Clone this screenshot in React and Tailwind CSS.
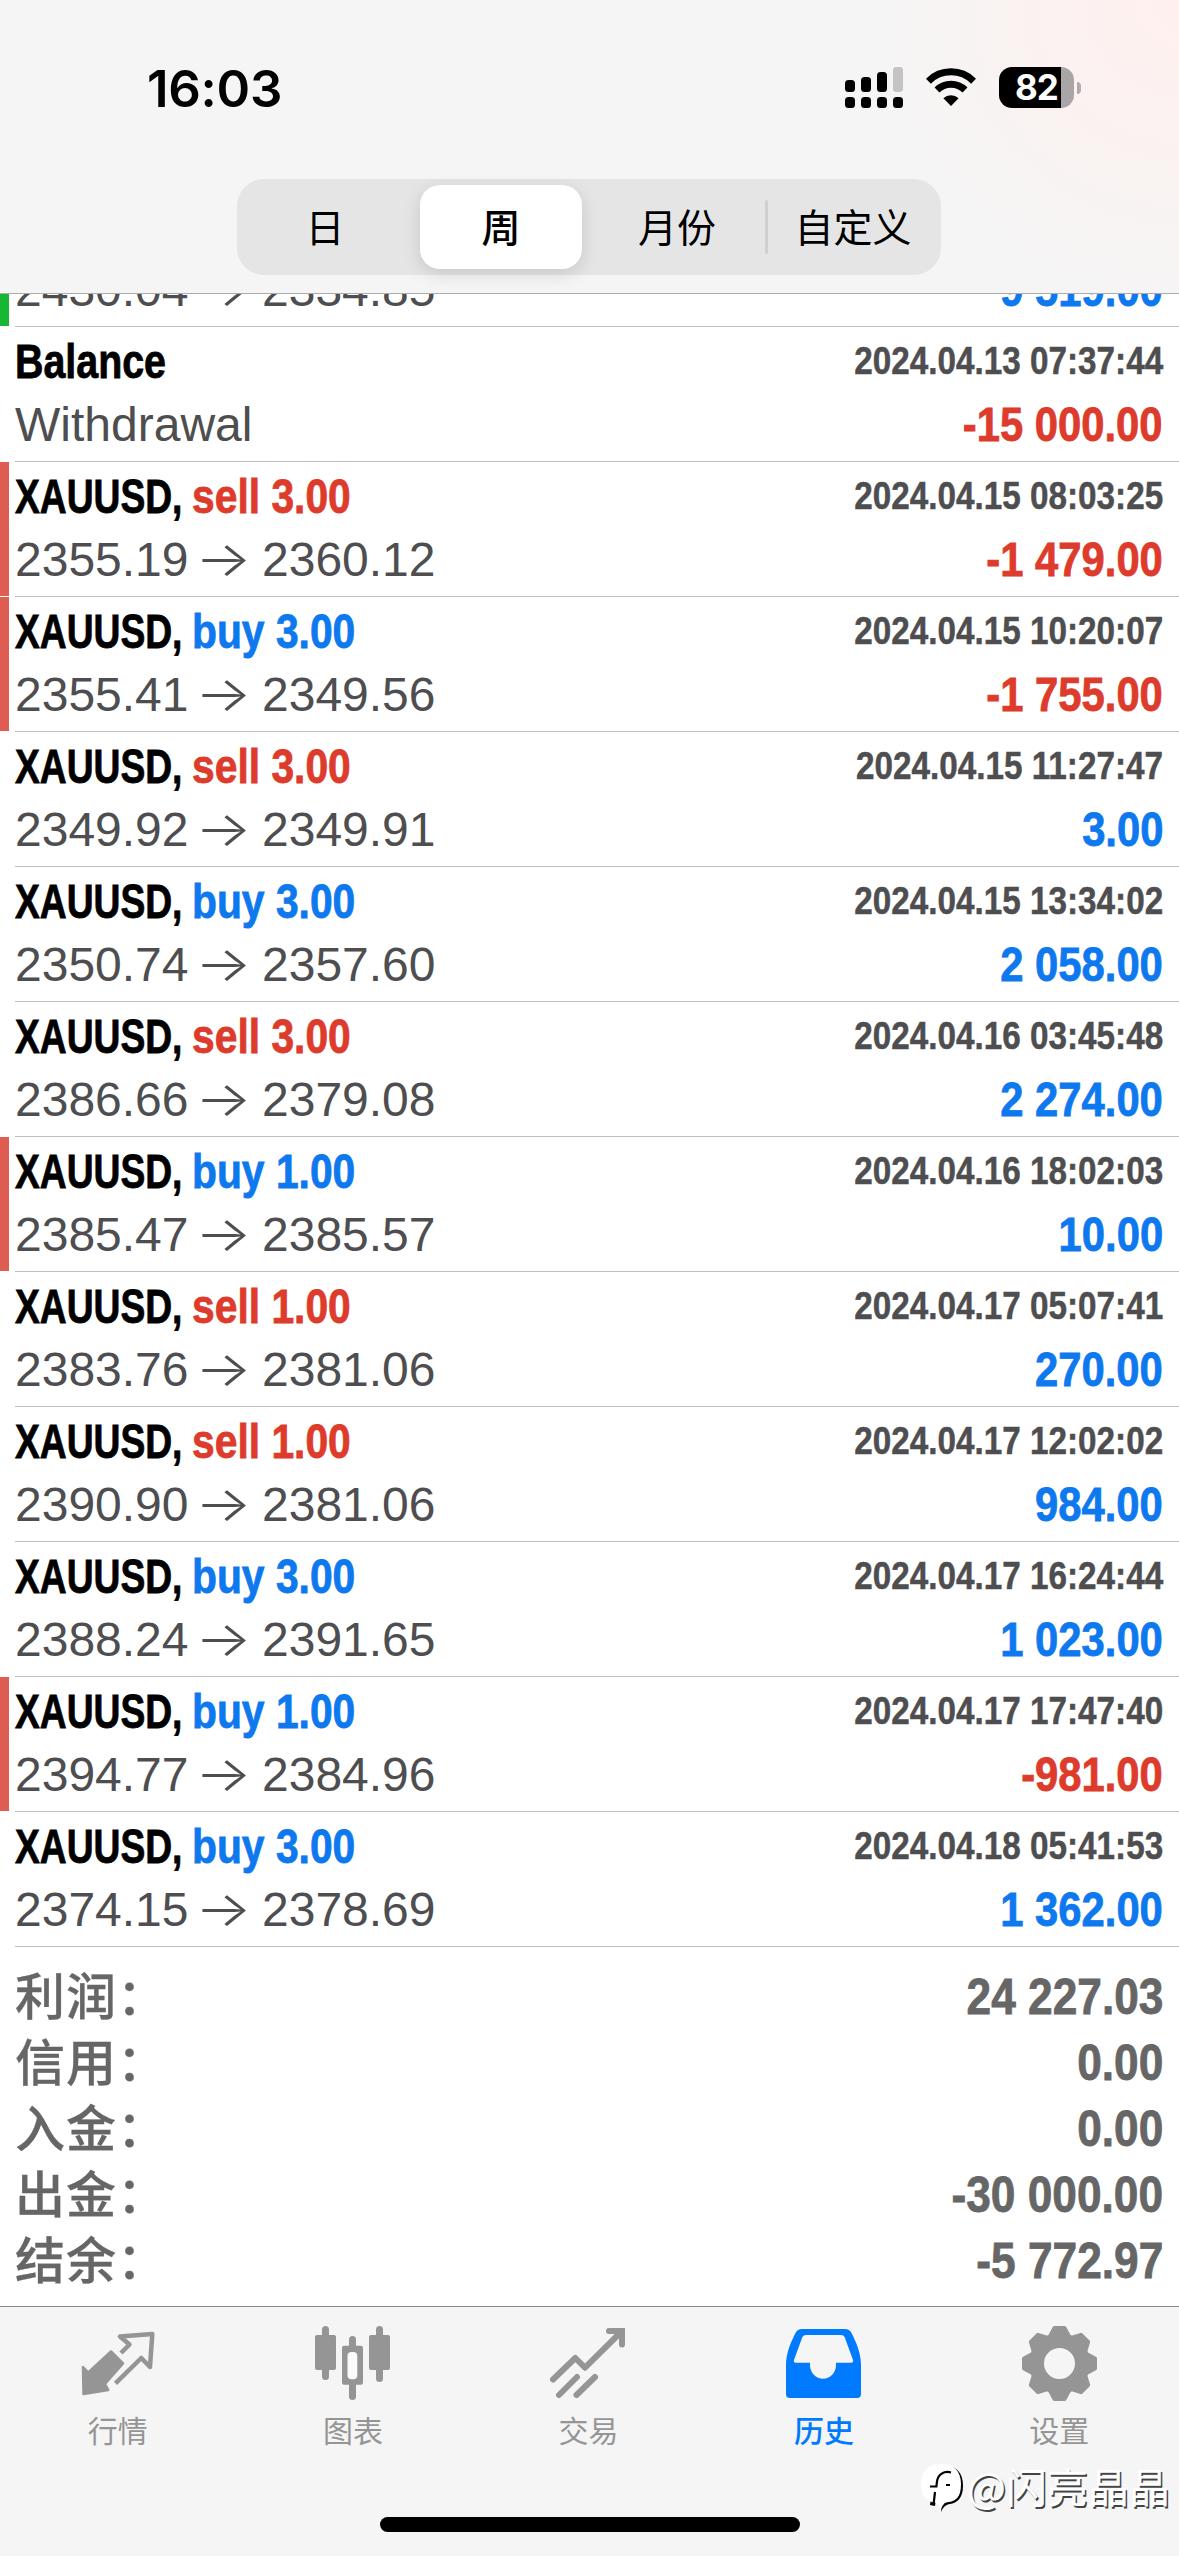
import clsx from "clsx";

const DEALS = [
  { side: "sell", lots: "3.00", from: "2355.19", to: "2360.12", time: "2024.04.15 08:03:25", profit: "-1 479.00", mark: "sl" },
  { side: "buy", lots: "3.00", from: "2355.41", to: "2349.56", time: "2024.04.15 10:20:07", profit: "-1 755.00", mark: "sl" },
  { side: "sell", lots: "3.00", from: "2349.92", to: "2349.91", time: "2024.04.15 11:27:47", profit: "3.00" },
  { side: "buy", lots: "3.00", from: "2350.74", to: "2357.60", time: "2024.04.15 13:34:02", profit: "2 058.00" },
  { side: "sell", lots: "3.00", from: "2386.66", to: "2379.08", time: "2024.04.16 03:45:48", profit: "2 274.00" },
  { side: "buy", lots: "1.00", from: "2385.47", to: "2385.57", time: "2024.04.16 18:02:03", profit: "10.00", mark: "sl" },
  { side: "sell", lots: "1.00", from: "2383.76", to: "2381.06", time: "2024.04.17 05:07:41", profit: "270.00" },
  { side: "sell", lots: "1.00", from: "2390.90", to: "2381.06", time: "2024.04.17 12:02:02", profit: "984.00" },
  { side: "buy", lots: "3.00", from: "2388.24", to: "2391.65", time: "2024.04.17 16:24:44", profit: "1 023.00" },
  { side: "buy", lots: "1.00", from: "2394.77", to: "2384.96", time: "2024.04.17 17:47:40", profit: "-981.00", mark: "sl" },
  { side: "buy", lots: "3.00", from: "2374.15", to: "2378.69", time: "2024.04.18 05:41:53", profit: "1 362.00" },
];

const TOTALS = [
  ["利润：", "24 227.03"],
  ["信用：", "0.00"],
  ["入金：", "0.00"],
  ["出金：", "-30 000.00"],
  ["结余：", "-5 772.97"],
];

const PERIODS = ["日", "周", "月份", "自定义"];

const GEAR_TEETH = [0, 45, 90, 135, 180, 225, 270, 315];

function SignalIcon() {
  return (
    <svg width="58" height="42" viewBox="0 0 58 42">
      <rect x="0" y="13" width="10" height="12" rx="3.5" />
      <rect x="16" y="10" width="10" height="15" rx="3.5" />
      <rect x="32" y="5" width="10" height="20" rx="3.5" />
      <rect x="48" y="0" width="10" height="25" rx="3" fill="#c4c4c4" />
      {[0, 16, 32, 48].map((x) => (
        <rect key={x} x={x} y="30" width="10" height="11" rx="3.5" />
      ))}
    </svg>
  );
}

function WifiIcon() {
  return (
    <svg width="50" height="42" viewBox="0 0 50 42" fill="none" stroke="#000" strokeWidth="7">
      <path d="M2.4 14.2a32 32 0 0 1 45.2 0" />
      <path d="M11 23a20 20 0 0 1 28 0" />
      <path d="M25 39l-7.6-7.8a11 11 0 0 1 15.2 0z" fill="#000" stroke="none" />
    </svg>
  );
}

function Battery() {
  return (
    <div className="flex items-center gap-[3px]">
      <div className="flex h-[41px] w-[75px] items-center justify-center overflow-hidden rounded-[13px] bg-linear-to-r from-black from-[62px] to-[#aaa5a6] to-[62px]">
        <span className="font-[Inter] text-[35px] leading-none font-bold tracking-[-1px] text-white">82</span>
      </div>
      <div className="h-3 w-1 rounded-r-full bg-[#b0acac]" />
    </div>
  );
}

function StatusBar() {
  return (
    <div className="flex h-[179px] justify-between pt-[67px] pr-[98px] pl-[147px]">
      <span className="font-[Inter] text-[51px] leading-[44px] font-semibold tracking-[-0.3px]">16:03</span>
      <div className="flex h-[42px] items-start gap-[23px]">
        <SignalIcon />
        <WifiIcon />
        <Battery />
      </div>
    </div>
  );
}

function PeriodPicker() {
  return (
    <div className="ml-[237px] grid h-24 w-[704px] grid-cols-4 rounded-[27px] bg-[#e6e5e6] font-['Noto_Sans_CJK_SC',sans-serif] text-[39px]">
      {PERIODS.map((p, i) => (
        <div key={p} className="flex items-center">
          <div
            className={clsx(
              "mx-[7px] flex h-[84px] flex-1 items-center justify-center rounded-[20px] pb-[5px] leading-[58px] whitespace-nowrap",
              i === 1 && "bg-white font-medium shadow-[0_5px_18px_rgba(0,0,0,0.13)]"
            )}
          >
            {p}
          </div>
          {i === 2 && <div className="-mr-[3px] h-[54px] w-[3px] rounded-full bg-[#d0d0d1]" />}
        </div>
      ))}
    </div>
  );
}

function Row({ title, detail, time, profit, mark }) {
  return (
    <div className="flex h-[135px] shrink-0">
      <div
        className={clsx(
          "h-[134px] w-[9px] shrink-0",
          mark === "sl" && "bg-[#de5c52]",
          mark === "tp" && "bg-[#18b733]"
        )}
      />
      <div className="ml-[6px] flex flex-1 justify-between border-b border-[#bcbfc1] pt-[3px] pr-4">
        <div className="text-[48px] leading-[63px] whitespace-nowrap">
          <div className="flex font-bold [-webkit-text-stroke:0.8px]">{title}</div>
          <div className="flex text-[#4e4e50]">{detail}</div>
        </div>
        <div className="flex flex-col items-end font-bold whitespace-nowrap">
          <div className="h-[63px] origin-right scale-x-[0.853] text-[39px] leading-[62px] text-[#4e4e50] [-webkit-text-stroke:0.5px]">
            {time}
          </div>
          <div
            className={clsx(
              "origin-right scale-x-[0.87] text-[48px] leading-[63px] [-webkit-text-stroke:0.8px]",
              profit.startsWith("-") ? "text-[#dd3b2b]" : "text-[#0e78ee]"
            )}
          >
            {profit}
          </div>
        </div>
      </div>
    </div>
  );
}

function Prices({ from, to }) {
  return (
    <>
      <span className="w-[184px]">{from}</span>
      <span className="w-[63px] origin-left -translate-x-1 scale-x-[1.24] font-[Inter] leading-[61px] font-light">→</span>
      <span>{to}</span>
    </>
  );
}

function Deal({ side, lots, from, to, time, profit, mark }) {
  return (
    <Row
      title={
        <>
          <span className="w-[177px] origin-left scale-x-[0.775]">XAUUSD,</span>
          <span className={clsx("origin-left scale-x-[0.85]", side === "sell" ? "text-[#dd3b2b]" : "text-[#0e78ee]")}>
            {side} {lots}
          </span>
        </>
      }
      detail={<Prices from={from} to={to} />}
      time={time}
      profit={profit}
      mark={mark}
    />
  );
}

function Totals() {
  return (
    <div className="h-[359px] pt-[17px] pr-4 pl-[15px] font-bold text-[#666]">
      {TOTALS.map(([label, value]) => (
        <div key={label} className="flex h-[66px] justify-between">
          <span className="font-['Noto_Sans_CJK_SC',sans-serif] text-[50px] leading-[58px] font-medium tracking-[1px] [-webkit-text-stroke:0.3px]">
            {label}
          </span>
          <span className="origin-right scale-x-[0.885] text-[50px] leading-[66px] [-webkit-text-stroke:0.8px]">{value}</span>
        </div>
      ))}
    </div>
  );
}

function QuotesIcon() {
  return (
    <svg width="80" height="80" viewBox="0 0 80 80" fill="none" stroke="currentColor" strokeLinejoin="round">
      <path d="M4 45l5.300 5.500L32 29.500 44 41.500 26 62l3.300 6L4.500 72z" fill="currentColor" strokeWidth="2.500" />
      <path d="M42 31l8.500-8.500L41 14.500l32.300-2.600L71 45l-8.700-9-25.800 25.300" strokeWidth="4.500" />
    </svg>
  );
}

function ChartIcon() {
  return (
    <svg width="80" height="80" viewBox="0 0 80 80" fill="currentColor">
      <rect x="8" y="4" width="7" height="54" rx="3.500" />
      <rect x="1" y="13" width="21" height="35" rx="2" />
      <rect x="35" y="14" width="7" height="64" rx="3.500" />
      <rect x="28" y="23.700" width="21" height="39" rx="2" />
      <rect x="33.500" y="30" width="9.800" height="27.300" rx="4" fill="#fafafa" />
      <rect x="62" y="4" width="7" height="56" rx="3.500" />
      <rect x="55" y="13" width="21" height="35" rx="2" />
    </svg>
  );
}

function TradeIcon() {
  return (
    <svg width="80" height="80" viewBox="0 0 80 80" fill="none" stroke="currentColor" strokeWidth="6" strokeLinecap="round">
      <path d="M4 57.500L26.300 36 36 45.700 72.500 9.500" strokeLinejoin="round" />
      <path d="M60 9h13v13.500" />
      <path d="M10 73l18-18M27.500 73L46 55" />
    </svg>
  );
}

function HistoryIcon() {
  return (
    <svg width="80" height="80" viewBox="0 0 80 80" fill="currentColor" fillRule="evenodd">
      <path d="M17 7h43q4.500 0 6.500 4C70 18 76 30 76 43v29q0 4-4 4H5q-4 0-4-4V43C1 30 7 18 10.500 11q2-4 6.500-4zM21 13q-3 0-4 3L9 38q-.8 2.700 2 2.700h14V43a13 13.700 0 0 0 26 0v-2.300h15q2.800 0 2-2.700l-8-22q-1-3-4-3z" />
    </svg>
  );
}

function SettingsIcon() {
  return (
    <svg width="80" height="80" viewBox="0 0 80 80">
      <g transform="translate(39.500 41.500)" fill="none" stroke="currentColor">
        <circle r="23" strokeWidth="15" />
        {GEAR_TEETH.map((a) => (
          <path
            key={a}
            d="M-9-28l4-7.500h10l4 7.500z"
            transform={`rotate(${a})`}
            fill="currentColor"
            strokeWidth="4"
            strokeLinejoin="round"
          />
        ))}
      </g>
    </svg>
  );
}

const TABS = [
  { label: "行情", Icon: QuotesIcon },
  { label: "图表", Icon: ChartIcon },
  { label: "交易", Icon: TradeIcon },
  { label: "历史", Icon: HistoryIcon, active: true },
  { label: "设置", Icon: SettingsIcon },
];

function TabBar() {
  return (
    <nav className="flex h-[250px] flex-col border-t border-[#858585] bg-[#f5f5f5]">
      <div className="grid grid-cols-5 pt-[15px] pr-[2px]">
        {TABS.map(({ label, Icon, active }) => (
          <div
            key={label}
            className={clsx("flex flex-col items-center", active ? "font-medium text-[#007aff]" : "text-[#959595]")}
          >
            <div className="pl-[2px]">
              <Icon />
            </div>
            <span className="mt-[5px] font-['Noto_Sans_CJK_SC',sans-serif] text-[30px] leading-[44px]">{label}</span>
          </div>
        ))}
      </div>
      <div className="mx-auto mt-auto mb-6 h-[15px] w-[420px] rounded-full bg-black" />
    </nav>
  );
}

function Watermark() {
  return (
    <div className="absolute right-[9px] bottom-[43px] flex items-center">
      <svg width="46" height="56" viewBox="0 0 46 56">
        <path d="M24 9c12 0 18 7 18 20 0 12-6 17-13 18-4 .6-7 3-9 8 0-4 1-6 3-8z" fill="#000" />
        <path d="M9 48l5 1 2-14h-5z" fill="#000" />
        <path d="M20 7c13 0 20 7 20 20 0 13-5 17-12 18-5 .7-8 3-9 7-1-3-1-4-3-6C5 45 0 39 0 27 0 14 7 7 20 7z" fill="#fff" />
        <path d="M30 15.500c-7-2-13 2-14 9l-.6 5H9M14 35l-1.500 13" fill="none" stroke="#000" strokeWidth="2.200" />
        <path d="M25 28h4" stroke="#000" strokeWidth="2" />
      </svg>
      <span className="font-['Noto_Sans_CJK_SC',sans-serif] text-[41px] leading-[56px] text-white [text-shadow:1.500px_1.500px_0_#444]">
        @闪亮晶晶
      </span>
    </div>
  );
}

export default function App() {
  return (
    <div className="relative flex h-[2556px] w-[1179px] flex-col overflow-hidden bg-white font-['Liberation_Sans',Arial,sans-serif] text-black">
      <header className="h-[294px] border-b border-[#acacac] bg-[#f5f5f5] bg-[radial-gradient(circle_at_100%_0%,#fff0ee,transparent_320px)]">
        <StatusBar />
        <PeriodPicker />
      </header>

      {/* row scrolled half under the header */}
      <div className="flex h-[33px] flex-col justify-end overflow-hidden">
        <Deal side="sell" lots="3.00" from="2430.04" to="2334.85" time="2024.04.12 20:14:30" profit="9 519.00" mark="tp" />
      </div>
      <Row
        title={<span className="origin-left scale-x-[0.82]">Balance</span>}
        detail="Withdrawal"
        time="2024.04.13 07:37:44"
        profit="-15 000.00"
      />
      {DEALS.map((d) => (
        <Deal key={d.time} {...d} />
      ))}
      <Totals />
      <TabBar />
      <Watermark />
    </div>
  );
}
